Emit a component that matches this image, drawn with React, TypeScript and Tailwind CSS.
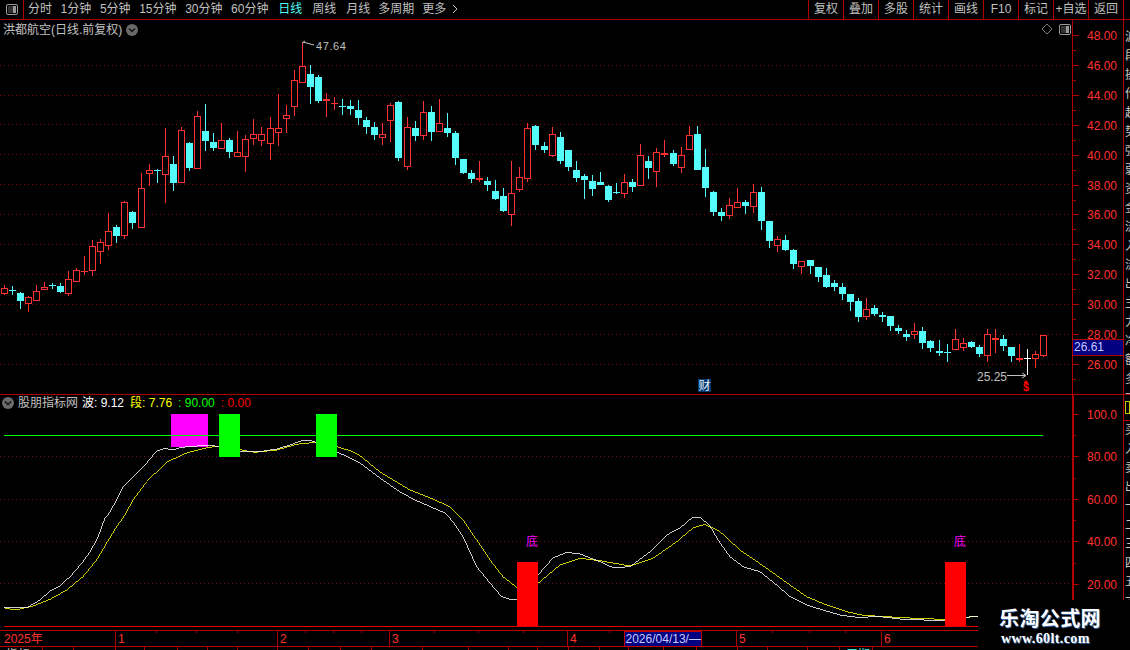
import React from 'react';

const RED = '#ff3232';
const CYAN = '#54fcfc';
const AXIS = '#b00000';
const FONT = '"Liberation Sans", "Noto Sans CJK SC", sans-serif';

// x, wick top, wick bottom, body top, body bottom, colour (r red, c cyan, w white)
type Candle = [number, number, number, number, number, 'r' | 'c' | 'w'];

const CANDLES: Candle[] = [
  [4, 285, 295, 288, 294, 'r'], [12, 286, 295, 290, 291, 'c'], [20, 292, 309, 293, 301, 'c'], [28, 296, 312, 297, 304, 'r'],
  [36, 285, 301, 291, 301, 'r'], [44, 282, 290, 287, 290, 'r'], [52, 283, 289, 285, 286, 'c'], [60, 283, 293, 286, 292, 'c'],
  [68, 271, 296, 279, 294, 'r'], [76, 268, 282, 270, 282, 'r'], [84, 256, 275, 271, 272, 'r'], [92, 240, 276, 246, 271, 'r'],
  [100, 239, 264, 242, 252, 'r'], [108, 213, 250, 231, 246, 'r'], [116, 225, 243, 227, 236, 'c'], [124, 201, 239, 202, 236, 'r'],
  [132, 211, 229, 212, 223, 'c'], [141, 173, 228, 188, 228, 'r'], [149, 164, 186, 170, 174, 'r'], [157, 169, 183, 170, 171, 'c'],
  [165, 128, 203, 156, 175, 'r'], [173, 156, 191, 164, 183, 'c'], [181, 127, 183, 130, 183, 'r'], [189, 142, 171, 143, 168, 'c'],
  [197, 111, 169, 116, 169, 'r'], [205, 104, 151, 131, 141, 'c'], [213, 133, 151, 142, 148, 'c'], [221, 123, 149, 140, 149, 'r'],
  [229, 138, 158, 140, 152, 'c'], [237, 131, 157, 152, 157, 'r'], [245, 135, 172, 139, 157, 'r'], [253, 119, 145, 134, 139, 'r'],
  [261, 127, 146, 134, 141, 'r'], [270, 117, 160, 128, 144, 'r'], [278, 94, 146, 128, 133, 'r'], [286, 105, 133, 115, 119, 'r'],
  [294, 70, 116, 80, 107, 'r'], [302, 43, 83, 66, 83, 'r'], [310, 65, 104, 74, 87, 'c'], [318, 75, 103, 77, 101, 'c'],
  [326, 93, 117, 99, 101, 'r'], [334, 97, 110, 103, 104, 'r'], [342, 99, 115, 106, 107, 'c'], [350, 100, 115, 106, 109, 'c'],
  [358, 100, 125, 110, 118, 'c'], [366, 117, 134, 120, 127, 'c'], [374, 122, 140, 127, 135, 'c'], [382, 123, 145, 134, 138, 'r'],
  [390, 103, 142, 105, 121, 'r'], [398, 101, 161, 102, 158, 'c'], [407, 117, 170, 127, 167, 'r'], [415, 121, 141, 128, 136, 'c'],
  [423, 101, 140, 112, 136, 'r'], [431, 106, 141, 112, 132, 'c'], [439, 99, 132, 123, 132, 'r'], [447, 113, 137, 128, 133, 'c'],
  [455, 131, 165, 133, 158, 'c'], [463, 159, 174, 159, 173, 'c'], [471, 170, 183, 173, 179, 'c'], [479, 161, 182, 178, 180, 'r'],
  [487, 177, 191, 181, 185, 'c'], [495, 180, 200, 191, 199, 'c'], [503, 188, 212, 196, 211, 'c'], [511, 161, 226, 193, 215, 'r'],
  [519, 167, 192, 177, 190, 'r'], [527, 123, 182, 128, 179, 'r'], [535, 125, 150, 126, 145, 'c'], [544, 142, 153, 146, 150, 'c'],
  [552, 127, 157, 134, 156, 'r'], [560, 132, 164, 137, 161, 'c'], [568, 150, 171, 150, 167, 'c'], [576, 161, 182, 170, 178, 'c'],
  [584, 174, 199, 176, 180, 'c'], [592, 175, 196, 181, 189, 'c'], [600, 172, 185, 182, 185, 'c'], [608, 185, 202, 186, 200, 'c'],
  [616, 183, 194, 192, 193, 'c'], [624, 174, 198, 182, 194, 'r'], [632, 179, 192, 182, 187, 'c'], [640, 144, 186, 155, 186, 'r'],
  [648, 156, 179, 161, 168, 'c'], [656, 148, 187, 152, 172, 'r'], [664, 140, 157, 153, 155, 'r'], [673, 150, 166, 153, 164, 'c'],
  [681, 147, 173, 155, 168, 'r'], [689, 126, 150, 135, 150, 'r'], [697, 126, 170, 134, 170, 'c'], [705, 149, 197, 167, 188, 'c'],
  [713, 191, 216, 192, 212, 'c'], [721, 208, 221, 212, 216, 'c'], [729, 198, 219, 205, 216, 'r'], [737, 188, 208, 202, 208, 'r'],
  [745, 200, 214, 202, 206, 'c'], [753, 184, 213, 192, 207, 'r'], [761, 187, 230, 192, 221, 'c'], [769, 221, 248, 221, 241, 'c'],
  [777, 236, 252, 239, 246, 'r'], [785, 235, 251, 240, 250, 'c'], [793, 249, 269, 250, 264, 'c'], [801, 261, 274, 261, 267, 'r'],
  [810, 260, 274, 260, 266, 'c'], [818, 267, 282, 267, 277, 'c'], [826, 268, 288, 275, 287, 'c'], [834, 280, 291, 283, 287, 'c'],
  [842, 283, 300, 287, 294, 'c'], [850, 294, 311, 294, 302, 'c'], [858, 298, 322, 301, 317, 'c'], [866, 298, 320, 309, 317, 'r'],
  [874, 305, 316, 308, 314, 'c'], [882, 312, 322, 315, 317, 'c'], [890, 316, 331, 316, 326, 'c'], [898, 325, 334, 328, 331, 'c'],
  [906, 330, 341, 334, 337, 'c'], [914, 323, 339, 331, 335, 'r'], [922, 327, 349, 331, 343, 'c'], [930, 340, 352, 341, 348, 'c'],
  [939, 340, 356, 351, 353, 'c'], [947, 344, 362, 352, 353, 'c'], [955, 329, 350, 339, 350, 'r'], [963, 338, 351, 343, 348, 'r'],
  [971, 341, 348, 342, 347, 'c'], [979, 345, 357, 347, 354, 'c'], [987, 329, 362, 334, 356, 'r'], [995, 329, 353, 338, 340, 'r'],
  [1003, 335, 351, 339, 346, 'c'], [1011, 347, 362, 347, 356, 'c'], [1019, 344, 362, 358, 360, 'r'], [1027, 349, 375, 358, 359, 'w'],
  [1035, 351, 368, 354, 359, 'r'], [1043, 335, 357, 335, 356, 'r'],
];

const WHITE_LINE =
  '4,607.7 26.7,607.7 40,600 50,591 60,586 71.7,575 83,561.7 90,551.7 96.7,540 100,531.7 105,518 108,515 116.7,500 123,486.7 136.7,473 146.7,463 156.7,451 165,448.3 173,450 181.7,447.3 208,445 220,446.7 241.7,451.7 260,451.7 276.7,449 290,445 301.7,440.7 311.7,440.7 336.7,451.7 360,463 380,478 400,492 415,500 445,513 453,521.7 463,536.7 476.7,566.7 490,583 501.7,596.7 511.7,600 516.7,599 538,575 553,558 566.7,552.3 580,554 600,561.7 613,567.7 630,566.7 650,551.7 666.7,535 680,528 693,517 700,517 710,526 720,543 730,556.7 743,566.7 760,571.7 776.7,585 790,596.7 806.7,605 823,610 840,615 856.7,617.3 880,616.7 903,619.3 945,620.7 966.7,617.3 978,616';
const YELLOW_LINE =
  '4,607.7 10,609 20,609 33,606 50,599.3 66.7,590 83,576.7 96.7,560 106.7,543 116.7,526.7 125,515 133,500 146.7,481.7 166.7,462 186.7,453 206.7,447.7 220,446 241.7,450 255,452.3 276.7,450 296.7,444.3 315,442.3 336.7,446.7 350,450.7 360,455.7 380,472 410,490 435,500 450,506.7 463,520 476.7,540 490,560 503,576.7 516.7,587.3 538,583.3 560,565 580,558.3 600,560.7 630,566 653,558.3 676.7,541.7 693,528 705,524.3 720,531.7 740,550 766.7,568.3 790,585 806.7,596.7 826.7,605 846.7,611.7 863,615.3 896.7,617.3 923,618.7 945,619.3 966,617.3 978,616.5';

// label and the space after it
const PERIODS: Array<[string, string]> = [
  ['分时', 'mr-[8.6px]'], ['1分钟', 'mr-[8.6px]'], ['5分钟', 'mr-[8.6px]'], ['15分钟', 'mr-[8.6px]'], ['30分钟', 'mr-[8.6px]'],
  ['60分钟', 'mr-[9.7px]'], ['日线', 'mr-[10px]'], ['周线', 'mr-[10px]'], ['月线', 'mr-[8px]'], ['多周期', 'mr-[8px]'], ['更多', 'mr-[6px]'],
];
const TOOLS = ['复权', '叠加', '多股', '统计', '画线', 'F10', '标记', '+自选', '返回'];

const UPPER_GRID = [65, 95, 124, 154, 184, 214, 244, 274, 304, 334, 364];
const PRICES = [48, 46, 44, 42, 40, 38, 36, 34, 32, 30, 28, 26];
const LOWER_GRID = [456, 499, 541, 583];
const INDICATOR_TICKS: Array<[number, string]> = [
  [414, '100.0'], [456, '80.00'], [499, '60.00'], [541, '40.00'], [584, '20.00'],
];

const TOP_TICKS = [156, 196, 237, 305, 333, 361, 434, 478, 523, 609, 772, 809, 845];
const MONTHS: Array<[number, string]> = [[115, '1'], [277, '2'], [389, '3'], [567, '4'], [736, '5'], [881, '6']];
const LOW_TICKS = [42, 73, 115, 144, 177, 207, 237, 277, 308, 340, 371, 422, 468, 508, 537, 568, 599, 628, 663, 696, 737, 767, 807, 839, 872];

const CandleMark: React.FC<{ candle: Candle }> = ({ candle }) => {
  const [x, wickTop, wickBottom, top, bottom, kind] = candle;
  const colour = kind === 'r' ? RED : kind === 'c' ? CYAN : '#ffffff';
  const flat = bottom - top <= 2;
  return (
    <g>
      <rect x={x} y={wickTop} width={1} height={wickBottom - wickTop} fill={colour} />
      {flat ? (
        <rect x={x - 3} y={top} width={7} height={bottom - top} fill={colour} />
      ) : kind === 'r' ? (
        <rect x={x - 2.5} y={top + 0.5} width={6} height={bottom - top - 1} fill="#000" stroke={colour} />
      ) : (
        <rect x={x - 3} y={top} width={7} height={bottom - top} fill={colour} />
      )}
    </g>
  );
};

const SideStrip: React.FC<{ chars: string; className: string }> = ({ chars, className }) => (
  <div className={`h-full w-[7px] overflow-hidden border-l border-[#b00000] pl-px text-[12px] leading-[19px] text-[#c8c8c8] ${className}`}>
    {chars.split('').map((c, i) => (
      <span key={i} className="block w-3">{c}</span>
    ))}
  </div>
);

const RoundButton: React.FC = () => (
  <svg width="12" height="12" viewBox="0 0 12 12">
    <circle cx="6" cy="6" r="6" fill="#6a6a6a" />
    <path d="M3 4.5 L6 7.5 L9 4.5" fill="none" stroke="#111" strokeWidth="1.4" />
  </svg>
);

const PanelIcon: React.FC<{ colour: string }> = ({ colour }) => (
  <svg width="12" height="11" viewBox="0 0 12 11">
    <rect x="0.5" y="0.5" width="11" height="10" rx="1.5" fill="none" stroke={colour} />
    <rect x="7" y="2" width="3" height="7" fill={colour} />
    <rect x="2" y="2" width="5" height="7" fill="#333" />
  </svg>
);

export default function App() {
  return (
    <div
      className="relative flex h-[650px] w-[1130px] flex-col overflow-hidden bg-black text-[12px] text-[#c0c0c0]"
      style={{ fontFamily: FONT }}
    >
      {/* toolbar */}
      <div className="flex h-[20px] shrink-0 border-b border-[#b00000] leading-[18px]">
        <div className="flex w-[24px] items-center justify-center border-r border-[#b00000]">
          <PanelIcon colour="#9a9a9a" />
        </div>
        <div className="flex flex-1 pl-1">
          {PERIODS.map(([p, space]) => (
            <span key={p} className={`${space} ${p === '日线' ? 'text-[#54fcfc]' : ''}`}>{p}</span>
          ))}
          <svg width="6" height="18" viewBox="0 0 6 18">
            <path d="M1 5 L5 9 L1 13" fill="none" stroke="#c0c0c0" />
          </svg>
        </div>
        <div className="flex">
          {TOOLS.map((t) => (
            <div key={t} className="w-[35px] border-l border-[#b00000] text-center whitespace-nowrap">{t}</div>
          ))}
          <div className="w-[7px] border-l border-[#b00000]" />
        </div>
      </div>

      {/* price pane */}
      <div className="flex h-[374px] shrink-0">
        <div className="relative w-[1072px]">
          <div className="absolute top-[2px] left-[3px] flex items-center gap-[4px] leading-[16px]">
            <span>洪都航空(日线.前复权)</span>
            <RoundButton />
          </div>
          <div className="absolute top-[3px] right-[1px] flex items-center gap-[6px]">
            <svg width="12" height="12" viewBox="0 0 12 12">
              <path d="M6 1 L11 6 L6 11 L1 6 Z" fill="none" stroke="#7a7a7a" />
            </svg>
            <PanelIcon colour="#9a9a9a" />
          </div>
          <svg width="1072" height="374" viewBox="0 20 1072 374" shapeRendering="crispEdges" className="block">
            {UPPER_GRID.map((y) => (
              <line key={y} x1="0" x2="1072" y1={y + 0.5} y2={y + 0.5} stroke="#800000" strokeDasharray="1 3" />
            ))}
            {CANDLES.map((c) => (
              <CandleMark key={c[0]} candle={c} />
            ))}
            <g shapeRendering="auto">
              <path d="M302 43 L305 41 M303 42 L314 45" stroke="#c0c0c0" fill="none" />
              <text x="316" y="50" fontSize="11" fill="#c0c0c0" letterSpacing="0.6">47.64</text>
              <text x="977" y="381" fontSize="12" fill="#c0c0c0">25.25</text>
              <path d="M1007 375.5 H1025 M1022 373 L1026 375.5 L1022 378" stroke="#c0c0c0" fill="none" />
              <text x="1023" y="391" fontSize="11" fontWeight="bold" fill="#ff0000">$</text>
              <path d="M1026 380 L1023.5 383 H1028.5 Z" fill="#ff0000" />
            </g>
            <rect x="698" y="379" width="13" height="13" fill="#003a70" />
            <text x="698.5" y="390" fontSize="12" fill="#e8f4ff">财</text>
          </svg>
        </div>
        <div className="relative w-[51px] border-l border-[#b00000]">
          <svg width="50" height="374" viewBox="1073 20 50 374" shapeRendering="crispEdges" className="block">
            {PRICES.map((p, i) => {
              const y = Math.round(35 + i * 29.9);
              return (
                <g key={p}>
                  <rect x="1073" y={y} width="6" height="1" fill={AXIS} />
                  <rect x="1073" y={y + 15} width="3" height="1" fill={AXIS} />
                  <text x="1087" y={y + 5} fontSize="12" fill={RED} shapeRendering="auto">{p.toFixed(2)}</text>
                </g>
              );
            })}
          </svg>
          <div className="absolute top-[319px] left-0 h-[17px] w-[50px] border-y border-[#b00000] bg-[#000080] pl-px leading-[15px] text-[#c8c8ff]">
            26.61
          </div>
        </div>
        <SideStrip className="pt-[8px]" chars="波段操作趋势强弱资金流入流出主力净额多空" />
      </div>

      {/* indicator pane */}
      <div className="flex h-[236px] shrink-0 border-t border-[#b00000]">
        <div className="relative w-[1072px]">
          <div className="absolute top-0 left-[2px] flex items-center leading-[16px] whitespace-pre">
            <RoundButton />
            <span className="ml-[4px]">股朋指标网</span>
            <span className="ml-[4px] text-white">波: 9.12</span>
            <span className="ml-[6px] text-[#ffff00]">段: 7.76</span>
            <span className="ml-[6px] text-[#00ff00]">: 90.00</span>
            <span className="ml-[6px] text-[#ff0000]">: 0.00</span>
          </div>
          <svg width="1072" height="236" viewBox="0 395 1072 236" className="block">
            <g shapeRendering="crispEdges">
              {LOWER_GRID.map((y) => (
                <line key={y} x1="0" x2="1072" y1={y + 0.5} y2={y + 0.5} stroke="#701010" strokeDasharray="1 3" />
              ))}
              <rect x="171" y="414" width="37" height="33" fill="#ff00ff" />
              <polyline points={YELLOW_LINE} fill="none" stroke="#ffff00" strokeWidth="0.8" />
              <polyline points={WHITE_LINE} fill="none" stroke="#ffffff" strokeWidth="0.8" />
              <rect x="4" y="435" width="1039" height="1" fill="#00ff00" />
              <rect x="219" y="414" width="21" height="43" fill="#00ff00" />
              <rect x="316" y="414" width="21" height="43" fill="#00ff00" />
              <rect x="517" y="562" width="21" height="65" fill="#ff0000" />
              <rect x="945" y="562" width="21" height="65" fill="#ff0000" />
              <rect x="4" y="626" width="974" height="1" fill="#e00000" />
            </g>
            <text x="526" y="546" fontSize="12" fill="#ff00ff">底</text>
            <text x="954" y="546" fontSize="12" fill="#ff00ff">底</text>
          </svg>
        </div>
        <div className="w-[51px] border-l-2 border-[#b00000]">
          <svg width="49" height="236" viewBox="1074 395 49 236" shapeRendering="crispEdges" className="block">
            {INDICATOR_TICKS.map(([y, label]) => (
              <g key={label}>
                <rect x="1074" y={y} width="5" height="1" fill={AXIS} />
                <rect x="1074" y={y - 21} width="2" height="1" fill={AXIS} />
                <text x="1087" y={y + 5} fontSize="12" fill={RED} shapeRendering="auto">{label}</text>
              </g>
            ))}
          </svg>
        </div>
        <div className="relative">
          <div className="absolute top-[6px] left-[2px] h-[13px] w-[5px] border border-[#c8c800]" />
          <div className="absolute top-[25px] left-0 h-px w-[7px] bg-[#b00000]" />
          <SideStrip className="pt-[26px]" chars="买入卖出一二三四五六七" />
        </div>
      </div>

      {/* time axis */}
      <svg width="1130" height="20" viewBox="0 630 1130 20" shapeRendering="crispEdges" className="block shrink-0">
        <rect x="0" y="630" width="1130" height="1" fill={AXIS} />
        <rect x="0" y="646" width="1130" height="1" fill={AXIS} />
        <text x="4" y="643" fontSize="12" fill={RED} shapeRendering="auto">2025年</text>
        {TOP_TICKS.map((x) => (
          <rect key={x} x={x} y="631" width="1" height="2" fill={AXIS} />
        ))}
        {MONTHS.map(([x, label]) => (
          <g key={label}>
            <rect x={x} y="631" width="1" height="15" fill={AXIS} />
            <text x={x + 3} y="643" fontSize="12" fill={RED} shapeRendering="auto">{label}</text>
          </g>
        ))}
        <rect x="624.5" y="631.5" width="77" height="15" fill="#000080" stroke="#c00000" />
        <text x="625.5" y="643" fontSize="12" fill="#c8c8ff" shapeRendering="auto">2026/04/13/—</text>
        {LOW_TICKS.map((x) => (
          <rect key={x} x={x} y="647" width="1" height="3" fill={AXIS} />
        ))}
        <text x="6" y="659" fontSize="12" fill="#c0c0c0" shapeRendering="auto">指标</text>
        <text x="846" y="659" fontSize="12" fill={CYAN} shapeRendering="auto">周期</text>
      </svg>

      {/* watermark */}
      <div className="absolute top-[600px] left-[978px] h-[50px] w-[152px] bg-black pt-[7px] pl-[21px]">
        <div className="text-[20px] leading-[24px] font-bold tracking-[0.4px] whitespace-nowrap text-white [text-shadow:1px_1px_0_#2f5f9f]">
          乐淘公式网
        </div>
        <div className="pl-[2px] text-[14px] leading-[16px] font-bold tracking-[0.4px] whitespace-nowrap text-white [font-family:'Liberation_Serif',serif] [text-shadow:1px_1px_0_#2f5f9f]">
          www.60lt.com
        </div>
      </div>
    </div>
  );
}
